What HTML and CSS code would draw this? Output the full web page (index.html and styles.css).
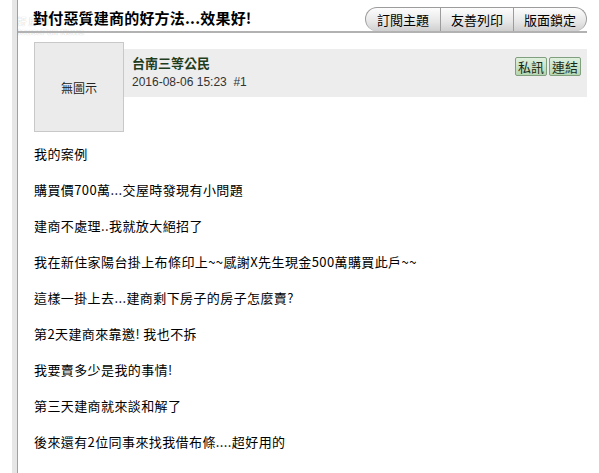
FILE: index.html
```html
<!DOCTYPE html>
<html lang="zh-Hant">
<head>
    <meta charset="UTF-8">
    <meta name="viewport" content="width=device-width, initial-scale=1.0">
    <title>對付惡質建商的好方法...效果好!</title>
    <link rel="stylesheet" href="styles.css">
</head>
<body>
    <div class="frame">
        <div class="main">
            <div class="topic-head">
                <h1 class="topic-title">對付惡質建商的好方法...效果好!</h1>
                <div class="tabs">
                    <a class="tab tab-first" href="#">訂閱主題</a>
                    <a class="tab" href="#">友善列印</a>
                    <a class="tab tab-last" href="#">版面鎖定</a>
                </div>
            </div>

            <div class="post">
                <div class="avatar">無圖示</div>
                <div class="post-bar">
                    <div class="post-info">
                        <div class="author">台南三等公民</div>
                        <div class="post-date">2016-08-06 15:23 &nbsp;#1</div>
                    </div>
                    <div class="post-actions">
                        <a class="gbtn" href="#">私訊</a>
                        <a class="gbtn" href="#">連結</a>
                    </div>
                </div>
            </div>

            <div class="post-body">
                <p>我的案例</p>
                <p>購買價700萬...交屋時發現有小問題</p>
                <p>建商不處理..我就放大絕招了</p>
                <p>我在新住家陽台掛上布條印上~~感謝X先生現金500萬購買此戶~~</p>
                <p>這樣一掛上去...建商剩下房子的房子怎麼賣?</p>
                <p>第2天建商來靠邀! 我也不拆</p>
                <p>我要賣多少是我的事情!</p>
                <p>第三天建商就來談和解了</p>
                <p>後來還有2位同事來找我借布條....超好用的</p>
            </div>
        </div>
    </div>
    <div class="watermark">
        <span class="wm-cn">好房網</span>
        <span class="wm-en">HouseFun News</span>
    </div>
</body>
</html>
```

FILE: styles.css
```css
body {
    margin: 0;
    background: #fff;
    color: #000;
    font-family: "Noto Sans CJK TC", "Liberation Sans", sans-serif;
    font-size: 13px;
}
.frame {
    margin-left: 12px;
    border-left: 5px solid #e6e6e6;
    min-height: 473px;
}
.main {
    border-left: 1px solid #a0a0a0;
    padding: 0 12px 0 16px;
    min-height: 473px;
}
.topic-head {
    display: flex;
    align-items: flex-end;
    justify-content: space-between;
    height: 31px;
    border-bottom: 2px solid #b2b2b2;
    margin-left: -16px;
    padding-left: 16px;
}
.topic-title {
    margin: 0 0 4px -1px;
    font-size: 15px;
    font-weight: bold;
    line-height: 18px;
    letter-spacing: 0.2px;
}
.tabs {
    display: flex;
}
.tab {
    display: block;
    height: 23px;
    line-height: 23px;
    padding: 0 8px;
    font-size: 13px;
    color: #000;
    text-decoration: none;
    border: 1px solid #9c9c9c;
    border-bottom: none;
    border-left: none;
    background: linear-gradient(#fdfdfd, #e6e6e6 60%, #cfcfcf);
    width: 56px;
    text-align: center;
}
.tab-first {
    border-left: 1px solid #9c9c9c;
    border-radius: 12px 0 0 12px;
    width: 58px;
}
.tab-last {
    border-radius: 0 12px 12px 0;
}
.post {
    display: flex;
    margin-top: 9px;
}
.avatar {
    width: 88px;
    height: 88px;
    flex: none;
    border: 1px solid #c8c8c8;
    background: #ebebeb;
    display: flex;
    align-items: center;
    justify-content: center;
    font-size: 12px;
    color: #222;
}
.post-bar {
    flex: 1;
    height: 48px;
    margin-top: 7px;
    background: #ededed;
    display: flex;
    justify-content: space-between;
    align-items: flex-start;
    padding: 0 6px 0 8px;
}
.post-info {
    padding-top: 6px;
}
.author {
    font-size: 13px;
    font-weight: bold;
    color: #1f3d1f;
    line-height: 16px;
}
.post-date {
    margin-top: 3px;
    font-family: "Liberation Sans", "Noto Sans CJK TC", sans-serif;
    font-size: 12px;
    color: #333;
    line-height: 16px;
}
.post-actions {
    display: flex;
    gap: 2px;
    padding-top: 8px;
}
.gbtn {
    display: block;
    width: 30px;
    height: 17px;
    line-height: 17px;
    text-align: center;
    font-size: 13px;
    color: #1a2a1a;
    text-decoration: none;
    border: 1px solid #7f9f7f;
    border-radius: 2px;
    background: linear-gradient(#e0f0de, #b5d6b1);
}
.post-body {
    padding-top: 13px;
}
.post-body p {
    margin: 0 0 18px 0;
    line-height: 18px;
    font-size: 13px;
    letter-spacing: 0.4px;
}
.watermark {
    position: absolute;
    z-index: -1;
    left: 14px;
    top: 17px;
    display: flex;
    flex-direction: column;
    align-items: center;
    color: #fff;
    text-shadow: 0 0 1px #bbb;
    line-height: 1;
}
.wm-cn {
    font-size: 9px;
    font-weight: bold;
    letter-spacing: 2px;
    margin-left: -30px;
}
.wm-en {
    font-family: "Liberation Sans", sans-serif;
    font-size: 9px;
    font-weight: bold;
    margin-top: 2px;
}
```
